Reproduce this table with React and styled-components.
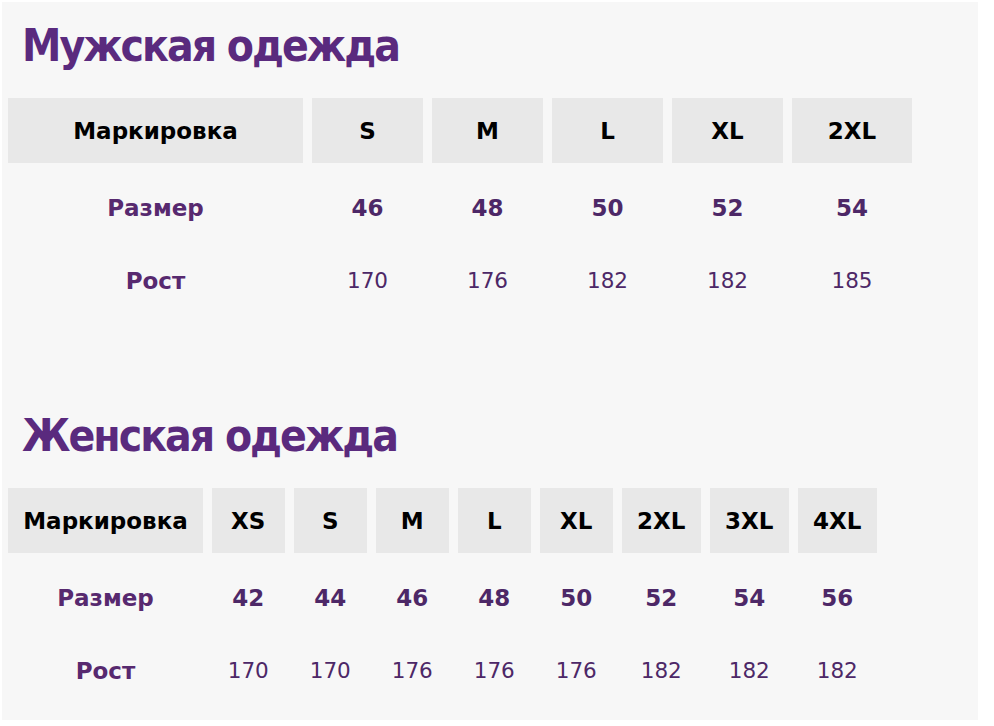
import React from "react";
import styled, { createGlobalStyle } from "styled-components";

// Таблицы размеров одежды
const MEN = {
  title: "Мужская одежда",
  columns: "295px repeat(4, 111px) 120px",
  gap: "9px",
  sizes: ["S", "M", "L", "XL", "2XL"],
  sizeNums: ["46", "48", "50", "52", "54"],
  heights: ["170", "176", "182", "182", "185"],
};

const WOMEN = {
  title: "Женская одежда",
  columns: "195px repeat(5, 73.5px) repeat(3, 79.5px)",
  gap: "8.5px",
  sizes: ["XS", "S", "M", "L", "XL", "2XL", "3XL", "4XL"],
  sizeNums: ["42", "44", "46", "48", "50", "52", "54", "56"],
  heights: ["170", "170", "176", "176", "176", "182", "182", "182"],
};

const SizeTable = ({ data }) => (
  <Section>
    <Title>{data.title}</Title>
    <HeaderRow $columns={data.columns} $gap={data.gap}>
      <HeaderCell>Маркировка</HeaderCell>
      {data.sizes.map((s) => (
        <HeaderCell key={s}>{s}</HeaderCell>
      ))}
    </HeaderRow>
    <Body>
      <BodyRow $columns={data.columns} $gap={data.gap}>
        <LabelCell>Размер</LabelCell>
        {data.sizeNums.map((n, i) => (
          <ValueCell key={i} $bold>
            {n}
          </ValueCell>
        ))}
      </BodyRow>
      <BodyRow $columns={data.columns} $gap={data.gap}>
        <LabelCell>Рост</LabelCell>
        {data.heights.map((n, i) => (
          <ValueCell key={i}>{n}</ValueCell>
        ))}
      </BodyRow>
    </Body>
  </Section>
);

const App = () => (
  <>
    <GlobalStyle />
    <Page>
      <Panel>
        <SizeTable data={MEN} />
        <SizeTable data={WOMEN} />
      </Panel>
    </Page>
  </>
);

// Styled Components

const GlobalStyle = createGlobalStyle`
  html, body {
    margin: 0;
    padding: 0;
    background: #ffffff;
  }
  body {
    font-family: "DejaVu Sans", Verdana, sans-serif;
  }
`;

const Page = styled.div`
  width: 994px;
  height: 726px;
  padding: 2px 16px 6px 2px;
  box-sizing: border-box;
  background: #ffffff;
`;

const Panel = styled.div`
  height: 100%;
  background: #f7f7f7;
  padding: 0 6px;
  box-sizing: border-box;
  display: flex;
  flex-direction: column;
  gap: 75px;
`;

const Section = styled.section`
  display: flex;
  flex-direction: column;
`;

const Title = styled.h2`
  margin: 16px 0 0 14px;
  height: 80px;
  font-family: "DejaVu Sans Condensed", "DejaVu Sans", sans-serif;
  font-stretch: condensed;
  font-size: 44px;
  line-height: 56px;
  letter-spacing: -2px;
  font-weight: bold;
  color: #5a2a7e;
`;

const HeaderRow = styled.div`
  display: grid;
  grid-template-columns: ${(p) => p.$columns};
  column-gap: ${(p) => p.$gap};
  height: 65px;
  margin-bottom: 8px;
`;

const HeaderCell = styled.div`
  display: flex;
  align-items: center;
  justify-content: center;
  background: #e8e8e8;
  color: #000000;
  font-size: 23px;
  font-weight: bold;
`;

const Body = styled.div`
  display: flex;
  flex-direction: column;
`;

const BodyRow = styled.div`
  display: grid;
  grid-template-columns: ${(p) => p.$columns};
  column-gap: ${(p) => p.$gap};
  height: 73px;
`;

const LabelCell = styled.div`
  display: flex;
  align-items: center;
  justify-content: center;
  color: #57296f;
  font-size: 23px;
  font-weight: bold;
`;

const ValueCell = styled.div`
  display: flex;
  align-items: center;
  justify-content: center;
  color: #4d2867;
  font-size: ${(p) => (p.$bold ? "23px" : "21.5px")};
  font-weight: ${(p) => (p.$bold ? "bold" : "normal")};
`;

export default App;
